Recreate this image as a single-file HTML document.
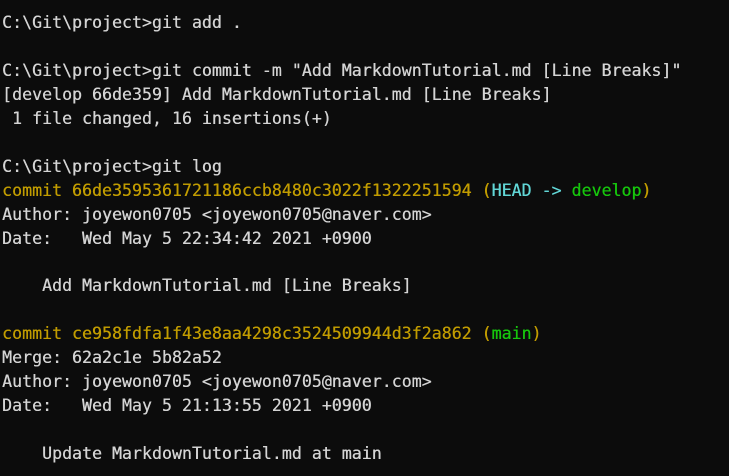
<!DOCTYPE html>
<html><head><style>
html,body{margin:0;padding:0;background:#0c0c0c;width:729px;height:476px;overflow:hidden}
pre{margin:0;position:absolute;left:2px;top:11px;font-family:"DejaVu Sans Mono","Liberation Mono",monospace;font-size:16.6px;line-height:23.95px;color:#d4d4d4;text-shadow:0.3px 0 0 currentColor}
.y{color:#c19c00}.c{color:#61d6d6}.g{color:#16c60c}
</style></head><body><pre>C:\Git\project>git add .

C:\Git\project>git commit -m "Add MarkdownTutorial.md [Line Breaks]"
[develop 66de359] Add MarkdownTutorial.md [Line Breaks]
 1 file changed, 16 insertions(+)

C:\Git\project>git log
<span class="y">commit 66de3595361721186ccb8480c3022f1322251594 (</span><span class="c">HEAD -&gt; </span><span class="g">develop</span><span class="y">)</span>
Author: joyewon0705 &lt;joyewon0705@naver.com&gt;
Date:   Wed May 5 22:34:42 2021 +0900

    Add MarkdownTutorial.md [Line Breaks]

<span class="y">commit ce958fdfa1f43e8aa4298c3524509944d3f2a862 (</span><span class="g">main</span><span class="y">)</span>
Merge: 62a2c1e 5b82a52
Author: joyewon0705 &lt;joyewon0705@naver.com&gt;
Date:   Wed May 5 21:13:55 2021 +0900

    Update MarkdownTutorial.md at main
</pre></body></html>
